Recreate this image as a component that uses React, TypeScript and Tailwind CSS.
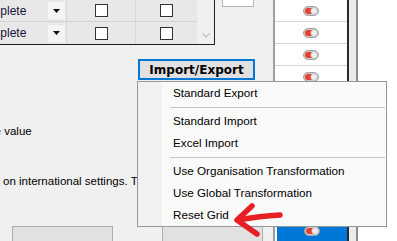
const sans = "font-['Liberation_Sans',Arial,sans-serif]";

const menuItems: (string | null)[] = [
  "Standard Export",
  null,
  "Standard Import",
  "Excel Import",
  null,
  "Use Organisation Transformation",
  "Use Global Transformation",
  "Reset Grid",
];

function Toggle() {
  return (
    <svg width="16" height="10" viewBox="0 0 16 10">
      <rect x="0.5" y="0.5" width="15" height="9" rx="4.5" fill="#c8c8c8" stroke="#a4a4a4" />
      <rect x="2" y="2" width="10" height="6" rx="3" fill="#e8412f" />
      <circle cx="11" cy="5" r="3.2" fill="#eeeeee" stroke="#c0c0c0" strokeWidth="0.6" />
    </svg>
  );
}

function CheckBox() {
  return <div className="w-[13px] h-[13px] border border-[#333] bg-white" />;
}

function GridRow({ first }: { first?: boolean }) {
  return (
    <div className={`flex h-[22px] ${first ? "border-b border-[#d2d2d2]" : ""}`}>
      <div className="w-[67px] flex items-center border-r border-[#d8d8d8]">
        <div className="flex-1 overflow-hidden whitespace-nowrap text-[12px] text-[#141438]">
          <span className="ml-[-25px]">Complete</span>
        </div>
        <div className="w-[17px] h-[17px] mr-[1px] bg-[#f4f4f4] flex items-center justify-center">
          <svg width="7" height="4" viewBox="0 0 7 4">
            <path d="M0 0h7L3.5 4z" fill="#111" />
          </svg>
        </div>
      </div>
      <div className="w-[69px] flex items-center justify-center border-r border-[#d8d8d8]">
        <CheckBox />
      </div>
      <div className="w-[61px] flex items-center justify-center">
        <CheckBox />
      </div>
    </div>
  );
}

export default function App() {
  return (
    <div className={`relative w-[397px] h-[241px] overflow-hidden bg-[#f0f0f0] flex ${sans}`}>
      {/* left part of the dialog */}
      <div className="w-[273px] flex flex-col shrink-0">
        <div className="flex h-[45px]">
          <div className="flex border-r border-b border-[#1e1e1e] bg-[#e8e8e8]">
            <div className="flex flex-col">
              <GridRow first />
              <GridRow />
            </div>
            <div className="w-[17px] bg-[#f0f0f0] flex flex-col justify-end items-center pb-[6px]">
              <svg width="8" height="5" viewBox="0 0 8 5">
                <path d="M0.5 0.5L4 4L7.5 0.5" fill="none" stroke="#bdbdbd" strokeWidth="1.2" />
              </svg>
            </div>
          </div>
          <div className="ml-[7px] w-[32px] h-[7px] bg-white border border-t-0 border-[#b5b5b5]" />
        </div>

        <div className="mt-[14px] pl-[138px]">
          <div className="w-[117px] h-[21px] border-2 border-[#0078d7] bg-[#e1e1e1] flex items-center justify-center font-['DejaVu_Sans',sans-serif] font-bold text-[12px] text-black">
            Import/Export
          </div>
        </div>

        <div className="mt-[8px] h-px bg-[#dadada]" />
        <div className="mt-[7px] h-px bg-white" />
        <div className="mt-[9px] h-px bg-[#d2d2d2]" />

        <div className="mt-[20px] h-[14px] leading-[14px] text-[11.5px] text-black whitespace-nowrap">
          <span className="ml-[-15px]">the value</span>
        </div>

        <div className="mt-[10px] ml-[72px] h-px bg-[#cfcfcf]" />
        <div className="mt-[15px] h-px bg-[#e2e2e2]" />

        <div className="mt-[11px] h-[14px] leading-[14px] pl-[3px] text-[11.5px] text-black whitespace-nowrap">
          on international settings. The format
        </div>

        <div className="mt-[27px] h-px bg-white" />

        <div className="mt-[11px] flex gap-[49px] pl-[12px]">
          <div className="w-[101px] h-[22px] bg-[#e1e1e1] border border-[#adadad]" />
          <div className="w-[101px] h-[22px] bg-[#e1e1e1] border border-[#adadad]" />
        </div>
      </div>

      {/* right grid with switches */}
      <div className="w-[2px] bg-[#9e9e9e]" />
      <div className="w-[72px] bg-white flex flex-col">
        {Array.from({ length: 11 }).map((_, i) => (
          <div
            key={i}
            className={`h-[22px] shrink-0 flex items-center justify-center border-b border-[#d4d4d4] ${
              i === 10 ? "bg-[#0078d7] ml-[2px]" : ""
            }`}
          >
            <Toggle />
          </div>
        ))}
      </div>
      <div className="w-[2px] bg-[#2a2a2a]" />
      <div className="w-[9px] bg-[#ececec] border-r-2 border-[#8c8c8c]" />
      <div className="flex-1 bg-white" />

      {/* context menu */}
      <div className="absolute left-[137px] top-[81px] w-[250px] border border-[#979797] bg-[#fafafa] flex">
        <div className="w-[24px] bg-[#f1f1f1]" />
        <div className="flex-1 flex flex-col">
          {menuItems.map((item, i) =>
            item === null ? (
              <div key={i} className="h-[6px] flex items-center pl-[8px] pr-[1px]">
                <div className="h-px w-full bg-[#c4c4c4]" />
              </div>
            ) : (
              <div key={i} className="h-[22px] flex items-center pl-[11px] text-[11.7px] text-black whitespace-nowrap">
                {item}
              </div>
            )
          )}
        </div>
      </div>

      {/* hand drawn red arrow */}
      <svg className="absolute left-0 top-0 pointer-events-none" width="397" height="241" viewBox="0 0 397 241">
        <path
          d="M280 215 Q260 216 238 220 M252 206 L237 220 L257 234"
          fill="none"
          stroke="#e81e25"
          strokeWidth="5.5"
          strokeLinecap="round"
          strokeLinejoin="round"
        />
      </svg>
    </div>
  );
}
